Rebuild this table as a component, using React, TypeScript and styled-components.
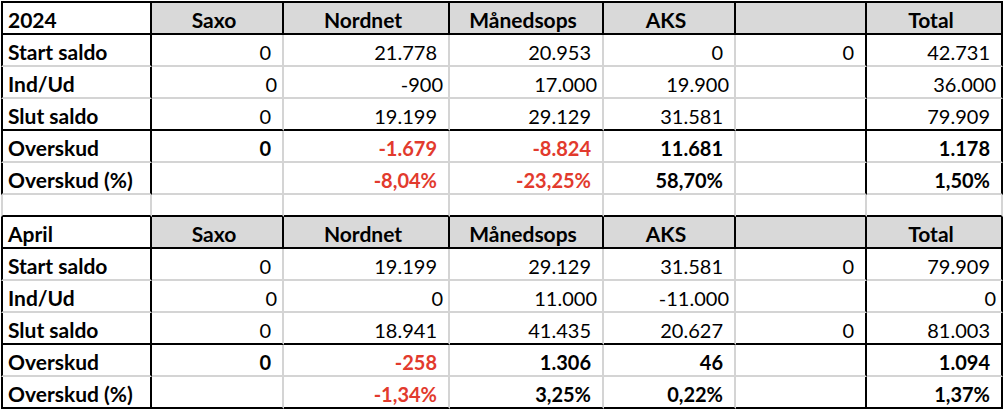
import React from 'react';
import styled, { createGlobalStyle } from 'styled-components';

const GlobalStyle = createGlobalStyle`
  html, body {
    margin: 0;
    padding: 0;
    background: #ffffff;
  }
  body {
    font-family: Lato, "Open Sans", "Liberation Sans", sans-serif;
    color: #000000;
  }
`;

const BLACK = '#000000';
const GRID = '#d4d4d4';
const RED = '#e23a2d';

const COLUMNS = '151px 132px 166px 154px 132px 131px 136px';

// right border colour of each column in the body rows
const bodyRight = [BLACK, GRID, GRID, GRID, GRID, BLACK, BLACK];

type Kind = 'head' | 'plain' | 'flow' | 'result';

interface SheetRow {
  label: string;
  values: string[];
  kind: Kind;
  bottom?: string;
}

interface Block {
  title: string;
  last: string;
  rows: SheetRow[];
}

const heads = ['Saxo', 'Nordnet', 'Månedsops', 'AKS', '', 'Total'];

const blocks: Block[] = [
  {
    title: '2024',
    last: GRID,
    rows: [
      { label: 'Start saldo', values: ['0', '21.778', '20.953', '0', '0', '42.731'], kind: 'plain' },
      { label: 'Ind/Ud', values: ['0', '-900', '17.000', '19.900', '', '36.000'], kind: 'flow' },
      { label: 'Slut saldo', values: ['0', '19.199', '29.129', '31.581', '', '79.909'], kind: 'plain', bottom: BLACK },
      { label: 'Overskud', values: ['0', '-1.679', '-8.824', '11.681', '', '1.178'], kind: 'result' },
      { label: 'Overskud (%)', values: ['', '-8,04%', '-23,25%', '58,70%', '', '1,50%'], kind: 'result' },
    ],
  },
  {
    title: 'April',
    last: BLACK,
    rows: [
      { label: 'Start saldo', values: ['0', '19.199', '29.129', '31.581', '0', '79.909'], kind: 'plain' },
      { label: 'Ind/Ud', values: ['0', '0', '11.000', '-11.000', '', '0'], kind: 'flow' },
      { label: 'Slut saldo', values: ['0', '18.941', '41.435', '20.627', '0', '81.003'], kind: 'plain', bottom: BLACK },
      { label: 'Overskud', values: ['0', '-258', '1.306', '46', '', '1.094'], kind: 'result' },
      { label: 'Overskud (%)', values: ['', '-1,34%', '3,25%', '0,22%', '', '1,37%'], kind: 'result' },
    ],
  },
];

const Sheet = styled.div`
  display: flex;
  flex-direction: column;
  width: 1002px;
  padding: 1px 0 0 1px;
  font-size: 20px;
`;

const Row = styled.div<{ $bottom: string; $top?: boolean; $height: number }>`
  display: grid;
  grid-template-columns: ${COLUMNS};
  height: ${(p) => p.$height}px;

  & > div {
    border-bottom: 2px solid ${(p) => p.$bottom};
    ${(p) => (p.$top ? `border-top: 2px solid ${BLACK};` : '')}
  }
`;

const Cell = styled.div<{
  $align?: 'left' | 'center' | 'right';
  $bold?: boolean;
  $red?: boolean;
  $shade?: boolean;
  $tight?: boolean;
  $label?: boolean;
  $right: string;
  $left?: string;
}>`
  box-sizing: border-box;
  display: flex;
  align-items: center;
  justify-content: ${(p) =>
    p.$align === 'center' ? 'center' : p.$align === 'right' ? 'flex-end' : 'flex-start'};
  padding: 3px ${(p) => (p.$tight ? 5 : 11)}px 0 5px;
  border-right: 2px solid ${(p) => p.$right};
  border-left: ${(p) => (p.$left ? `2px solid ${p.$left}` : 'none')};
  background: ${(p) => (p.$shade ? '#d9d9d9' : '#ffffff')};
  font-size: ${(p) => (p.$label ? 21 : 20)}px;
  font-weight: ${(p) => (p.$bold ? 700 : 400)};
  color: ${(p) => (p.$red ? RED : '#000000')};
  white-space: nowrap;
`;

function HeadRow({ title, top }: { title: string; top: boolean }) {
  return (
    <Row $bottom={BLACK} $top={top} $height={top ? 34 : 32}>
      <Cell $bold $label $right={BLACK} $left={BLACK}>
        {title}
      </Cell>
      {heads.map((h, i) => (
        <Cell key={i} $bold $label $shade $align="center" $right={BLACK}>
          {h}
        </Cell>
      ))}
    </Row>
  );
}

function BodyRow({ row, bottom }: { row: SheetRow; bottom: string }) {
  const bold = row.kind === 'result';
  return (
    <Row $bottom={bottom} $height={32}>
      <Cell $bold $label $right={BLACK} $left={BLACK}>
        {row.label}
      </Cell>
      {row.values.map((v, i) => (
        <Cell
          key={i}
          $align="right"
          $bold={bold}
          $red={bold && v.startsWith('-')}
          $tight={row.kind === 'flow'}
          $right={bodyRight[i + 1]}
        >
          {v}
        </Cell>
      ))}
    </Row>
  );
}

function GapRow() {
  return (
    <Row $bottom={BLACK} $height={22}>
      {bodyRight.map((_, i) => (
        <Cell key={i} $right={GRID} $left={i === 0 ? GRID : undefined} />
      ))}
    </Row>
  );
}

export default function App() {
  return (
    <>
      <GlobalStyle />
      <Sheet>
        {blocks.map((block, b) => (
          <React.Fragment key={block.title}>
            {b > 0 && <GapRow />}
            <HeadRow title={block.title} top={b === 0} />
            {block.rows.map((row, r) => (
              <BodyRow
                key={row.label}
                row={row}
                bottom={r === block.rows.length - 1 ? block.last : row.bottom ?? GRID}
              />
            ))}
          </React.Fragment>
        ))}
      </Sheet>
    </>
  );
}
